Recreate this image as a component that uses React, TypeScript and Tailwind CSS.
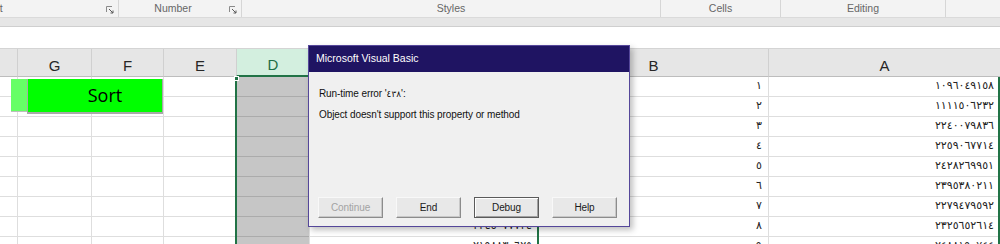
import React from 'react'

const groups = [
  { label: 'Alignment', w: 'w-[118px]', launcher: true, box: 'justify-start', offset: '-ml-[44px]' },
  { label: 'Number', w: 'w-[123px]', launcher: true, box: 'justify-center pr-[14px]', offset: '' },
  { label: 'Styles', w: 'w-[419px]', launcher: false, box: 'justify-center', offset: '' },
  { label: 'Cells', w: 'w-[120px]', launcher: false, box: 'justify-center', offset: '' },
  { label: 'Editing', w: 'w-[165px]', launcher: false, box: 'justify-center', offset: '' },
  { label: '', w: 'w-[55px]', launcher: false, box: 'justify-center', offset: '' },
]

const cols = [
  { key: 'H', w: 'w-[17px]' },
  { key: 'G', w: 'w-[74px]' },
  { key: 'F', w: 'w-[72px]' },
  { key: 'E', w: 'w-[73px]' },
  { key: 'D', w: 'w-[73px]' },
  { key: 'C', w: 'w-[229px]' },
  { key: 'B', w: 'w-[230px]' },
  { key: 'A', w: 'w-[232px]' },
]

const rows = [
  { b: '١', a: '١٠٩٦٠٤٩١٥٨', c: '٢١٠٩٥٤٤٣١٢' },
  { b: '٢', a: '١١١١٥٠٦٢٣٢', c: '٢٢٠٣٩٥١١٤٧' },
  { b: '٣', a: '٢٢٤٠٠٧٩٨٣٦', c: '٢٣١٨٨٠٤٦٢٥' },
  { b: '٤', a: '٢٢٥٩٠٦٧٧١٤', c: '٢١٧٧٦٣٠٩٥٨' },
  { b: '٥', a: '٢٤٢٨٢٦٩٩٥١', c: '٢٢٩٥٠٤٨٣٦٦' },
  { b: '٦', a: '٢٣٩٥٣٨٠٢١١', c: '٢٤٠١٧٧٥٢٣٩' },
  { b: '٧', a: '٢٢٧٩٤٧٩٥٩٢', c: '٢٣٣٦٢٠٩٤٨١' },
  { b: '٨', a: '٢٣٢٥٦٥٢٦١٤', c: '٢٢٤٥٠٧٧٧٢٤' },
  { b: '٩', a: '٢٤٨٨١٩٠٧٤٤', c: '٢١٩٨٨٣٠٦٢٥' },
]

function Launcher() {
  return (
    <svg width="8" height="8" viewBox="0 0 8 8" className="shrink-0">
      <path d="M0.5 6V0.5H6" fill="none" stroke="#8a8a8a" strokeWidth="1" />
      <path d="M3 3L7 7M7 4.5V7H4.5" fill="none" stroke="#5a5a5a" strokeWidth="1" />
    </svg>
  )
}

function DlgButton({ label, disabled, primary }: { label: string; disabled?: boolean; primary?: boolean }) {
  return (
    <div
      className={`w-[65px] h-[21px] flex items-center justify-center bg-[#e8e8e8] border ${
        primary ? 'border-[#5a5a5a] shadow-[inset_1px_1px_0_#ffffff,inset_-1px_-1px_0_#a0a0a0]' : 'border-t-[#f8f8f8] border-l-[#f8f8f8] border-r-[#8c8c8c] border-b-[#8c8c8c] shadow-[inset_-1px_-1px_0_#c8c8c8]'
      } ${disabled ? 'text-[#a3a3a3]' : 'text-[#1a1a1a]'}`}
    >
      {label}
    </div>
  )
}

export default function App() {
  return (
    <div className="relative w-[1000px] h-[244px] overflow-hidden bg-white font-['Liberation_Sans',Arial,sans-serif]">
      {/* Ribbon group labels */}
      <div className="flex h-[18px] bg-[#f3f3f3] border-b border-[#dadada] text-[10.5px] text-[#666666] overflow-hidden">
        {groups.map((g, i) => (
          <div key={i} className={`${g.w} shrink-0 relative flex items-center overflow-hidden ${g.box} ${i > 0 ? 'border-l border-[#d6d6d6]' : ''}`}>
            <span className={`${g.offset} leading-none whitespace-nowrap`}>{g.label}</span>
            {g.launcher && (
              <div className="absolute right-[4px] top-[6px]">
                <Launcher />
              </div>
            )}
          </div>
        ))}
      </div>
      <div className="h-[9px] bg-[#e6e6e6] border-b border-[#cfcfcf]" />
      {/* Formula bar area */}
      <div className="h-[22px] bg-white border-b border-[#d4d4d4]" />

      {/* Column headers */}
      <div className="flex h-[28px] bg-[#e6e6e6] text-[15px] text-[#262626]">
        {cols.map((c, i) => (
          <div
            key={c.key}
            className={`${c.w} shrink-0 flex items-end justify-center pb-[1px] leading-[18px] ${i > 0 ? 'border-l border-[#d0d0d0]' : ''} ${
              c.key === 'D' || c.key === 'C'
                ? 'bg-[#d3efdf] text-[#1e6e46] border-b-2 border-b-[#217346]'
                : 'border-b border-b-[#bdbdbd]'
            }`}
          >
            {c.key === 'H' ? '' : c.key}
          </div>
        ))}
      </div>

      {/* Grid rows */}
      <div className="flex flex-col font-['DejaVu_Sans',sans-serif] text-[11px] text-[#222222]">
        {rows.map((r, ri) => (
          <div key={ri} className="flex h-[20px]">
            {cols.map((c, i) => {
              const sel = c.key === 'D'
              const val = c.key === 'A' ? r.a : c.key === 'B' ? r.b : c.key === 'C' ? r.c : ''
              return (
                <div
                  key={c.key}
                  className={`${c.w} shrink-0 flex items-center justify-end pr-[6px] border-b ${i > 0 ? 'border-l' : ''} ${
                    sel ? 'bg-[#c6c6c6] border-[#ababab]' : 'bg-white border-[#dedede]'
                  }`}
                >
                  {val}
                </div>
              )
            })}
          </div>
        ))}
      </div>

      {/* Selection border around D:C */}
      <div className="absolute left-[235px] top-[77px] w-[304px] h-[180px] border-x-2 border-[#217346]" />
      <div className="absolute left-[234px] top-[76px] w-[5px] h-[5px] bg-[#217346] border border-white" />
      <div className="absolute right-0 top-[77px] w-[2px] h-[180px] bg-[#217346]" />

      {/* Sort shape */}
      <div className="absolute left-[11px] top-[79px] w-[16px] h-[33px] bg-[#66ff66] border-b border-[#bdbdbd]" />
      <div className="absolute left-[27px] top-[79px] w-[136px] h-[35px] bg-[#00ff00] border-l border-r border-b-2 border-[#a8a8a8] flex items-center justify-center pl-[20px] font-['Open_Sans',sans-serif] text-[18px] text-black">
        Sort
      </div>

      {/* VBA error dialog */}
      <div className="absolute left-[308px] top-[45px] w-[322px] h-[182px] border border-[#55479a] bg-[#f0f0f0] flex flex-col shadow-[3px_3px_6px_rgba(0,0,0,0.25)] text-[10px] tracking-[-0.1px]">
        <div className="h-[26px] bg-[#1f1462] text-white flex items-center px-[7px] text-[10.5px] tracking-normal">Microsoft Visual Basic</div>
        <div className="flex flex-col gap-[5px] pl-[10px] pt-[14px] text-[#111111]">
          <div>Run-time error '<span className="font-['DejaVu_Sans',sans-serif] text-[9px]">٤٣٨</span>':</div>
          <div>Object doesn't support this property or method</div>
        </div>
        <div className="mt-auto mb-[8px] flex gap-[13px] pl-[9px]">
          <DlgButton label="Continue" disabled />
          <DlgButton label="End" />
          <DlgButton label="Debug" primary />
          <DlgButton label="Help" />
        </div>
      </div>
    </div>
  )
}
